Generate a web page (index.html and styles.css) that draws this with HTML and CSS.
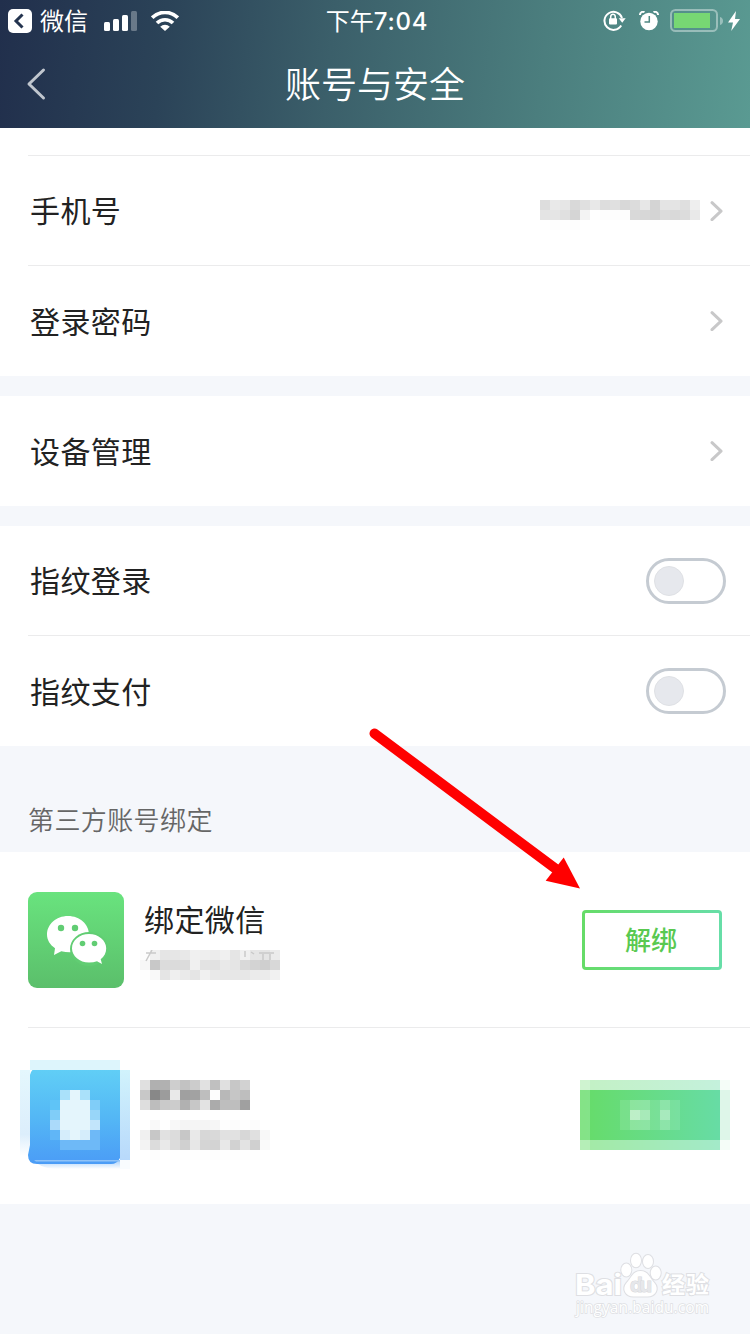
FILE: index.html
```html
<!DOCTYPE html>
<html lang="zh-CN">
<head>
<meta charset="utf-8">
<title>账号与安全</title>
<link rel="stylesheet" href="styles.css">
</head>
<body>
<div class="screen">
  <header class="header">
    <div class="status">
      <div class="status-left">
        <svg class="back-app" width="24" height="24" viewBox="0 0 24 24"><rect width="24" height="24" rx="5" fill="#fff"/><path d="M14.500 5.500 8 12l6.500 6.500" fill="none" stroke="#24344f" stroke-width="3"/></svg>
        <span class="carrier">微信</span>
        <svg class="signal" width="33" height="20" viewBox="0 0 33 20" fill="#fff"><rect y="11" width="6" height="9" rx="1.500"/><rect x="9" y="8" width="6" height="12" rx="1.500"/><rect x="18" y="4" width="6" height="16" rx="1.500"/><rect x="27" width="6" height="20" rx="1.500" opacity=".3"/></svg>
        <svg class="wifi" width="28" height="20" viewBox="0 0 28 20"><g fill="none" stroke="#fff" stroke-width="3.600"><path d="M1.200 6.700a18 18 0 0 1 25.600 0"/><path d="M6 12a11.300 11.300 0 0 1 16 0"/></g><path d="M14 20 9.200 15.700a7 7 0 0 1 9.600 0z" fill="#fff"/></svg>
      </div>
      <div class="time">下午<span class="digits">7:04</span></div>
      <div class="status-right">
        <svg width="23" height="22" viewBox="0 0 23 22"><path d="M18.200 15.500A9 9 0 1 1 19 8" fill="none" stroke="#fff" stroke-width="2"/><path d="M15.700 8.200h7l-3.500 4.600z" fill="#fff"/><path d="M7.700 9V7a2.300 2.800 0 0 1 4.600 0v2" fill="none" stroke="#fff" stroke-width="1.500"/><rect x="6" y="8.200" width="8" height="6.300" rx="1" fill="#fff"/></svg>
        <svg class="alarm" width="20" height="20" viewBox="0 0 20 20"><circle cx="10" cy="10.500" r="8.700" fill="#fff"/><path d="M10.300 5v6H5.500" fill="none" stroke="#508883" stroke-width="1.500"/><path d="M1 4A3 3 0 0 1 5.500 1.200M19 4A3 3 0 0 0 14.500 1.200" fill="none" stroke="#fff" stroke-width="2"/></svg>
        <svg class="battery" width="54" height="24" viewBox="0 0 54 24"><rect x="1" y="1" width="46" height="21" rx="4.500" fill="none" stroke="#fff" stroke-opacity=".4" stroke-width="2"/><rect x="4" y="4" width="36" height="15" fill="#77d773"/><path d="M50 8c2 .5 3 2 3 4s-1 3.500-3 4z" fill="#fff" fill-opacity=".4"/></svg>
        <svg class="bolt" width="12" height="20" viewBox="0 0 12 20"><path d="M8 0 0 11.500h5L3.200 20 12 8H7z" fill="#fff"/></svg>
      </div>
    </div>
    <div class="navbar">
      <svg class="nav-back" width="20" height="34" viewBox="0 0 20 34"><path d="M17.500 3 3 17l14.500 14" fill="none" stroke="#c0c6ce" stroke-width="3" stroke-linecap="round" stroke-linejoin="round"/></svg>
      <h1 class="title">账号与安全</h1>
    </div>
  </header>

  <section class="group group-first">
    <div class="row divided">
      <span class="label">手机号</span>
      <svg class="mosaic phone" width="160" height="21" data-rows="dd e9 e6 d9 e0 e8 dd e0 d8 dc e7 d4 e4 e4 df ee/e4 e5 e0 d5 f3 ff fd fd fd d9 d7 d4 dc d9 dc e9/ff fd fe fd ff ff ff ff ff fe fe fe fe fe fe ff"></svg>
      <svg class="chevron" width="14" height="20" viewBox="0 0 14 20"><path d="m2 1.700 9 8.500-9 8.500"/></svg>
    </div>
    <div class="row divided last">
      <span class="label">登录密码</span>
      <svg class="chevron" width="14" height="20" viewBox="0 0 14 20"><path d="m2 1.700 9 8.500-9 8.500"/></svg>
    </div>
  </section>

  <section class="group">
    <div class="row">
      <span class="label">设备管理</span>
      <svg class="chevron" width="14" height="20" viewBox="0 0 14 20"><path d="m2 1.700 9 8.500-9 8.500"/></svg>
    </div>
  </section>

  <section class="group">
    <div class="row short"><span class="label">指纹登录</span><span class="switch"><span class="knob"></span></span></div>
    <div class="row divided last"><span class="label">指纹支付</span><span class="switch"><span class="knob"></span></span></div>
  </section>

  <h2 class="section-title">第三方账号绑定</h2>

  <section class="accounts">
    <div class="account">
      <svg class="app-icon" width="96" height="96" viewBox="0 0 96 96">
        <defs><linearGradient id="wx" x2="0" y2="1"><stop stop-color="#69e37e"/><stop offset="1" stop-color="#5bbf6b"/></linearGradient></defs>
        <rect width="96" height="96" rx="9" fill="url(#wx)"/>
        <path d="M40 24C28 24 19 32.500 19 42.500c0 5.500 3 10.300 8 13.700L26 63l7.300-3.700q4 1 8.500 1C54 60 61 51.500 61 42.500 61 32.500 52 24 40 24z" fill="#fff"/>
        <ellipse cx="61" cy="57" rx="19" ry="17" fill="#61cd73"/>
        <path d="M61 42c-9.500 0-17 6.300-17 14.200S51.500 70.500 61 70.500q4.500 0 8-1.300l5 2.800-1.300-4.700c3.600-2.800 5.500-6.500 5.500-11.100 0-7.900-7.700-14.200-17.200-14.200z" fill="#fff"/>
        <g fill="#61cd73"><circle cx="33" cy="36" r="3.200"/><circle cx="47" cy="36" r="3.200"/><circle cx="54.500" cy="51.500" r="2.800"/><circle cx="66.500" cy="51.500" r="2.800"/></g>
      </svg>
      <div class="account-text">
        <span class="label">绑定微信</span>
        <div class="nickname">
          <svg class="mosaic" width="140" height="30" data-rows="fc f0 e5 e6 e8 f0 ee ec f0 e5 f0 e5 e5 eb/f7 c8 dc db dc f0 e3 e2 e9 e5 d9 d3 cf d8/fe f9 e5 ef ea e5 f0 e9 e7 e7 e7 eb eb f1"></svg>
          <svg class="glyph-traces" width="140" height="12" viewBox="0 0 140 12"><path d="M6 3h10M12 0 6 11M105 1v6M111 2l3 2M119 3h15M123 4v6M130 4v6" /></svg>
        </div>
      </div>
      <button class="unbind">解绑</button>
    </div>

    <div class="account account-second">
      <svg class="qq" width="110" height="110" viewBox="0 0 110 110">
        <defs><linearGradient id="qq" x2="0" y2="1"><stop stop-color="#61cff6"/><stop offset=".5" stop-color="#54b8f5"/><stop offset="1" stop-color="#4b9cf6"/></linearGradient>
        <linearGradient id="qqSide" x2="0" y2="1"><stop stop-color="#d1f3fc"/><stop offset="1" stop-color="#b8d9fb"/></linearGradient>
        <linearGradient id="qqFade" x2="0" y2="1"><stop stop-color="#e4f7fd"/><stop offset=".75" stop-color="#dceefc"/><stop offset="1" stop-color="#fff"/></linearGradient>
        <linearGradient id="qqBottom" x2="0" y2="1"><stop stop-color="#a8d0fa"/><stop offset="1" stop-color="#fff"/></linearGradient></defs>
        <path d="M14 100h86v9H34q-14-1-20-9z" fill="url(#qqBottom)"/>
        <path d="M0 10h10v86H0z" fill="url(#qqFade)"/>
        <path d="M10 15q1-6 7-7h83v90q-3 6-9 6H17q-9 0-9-9l2-10z" fill="url(#qq)"/>
        <path d="M10 0h90v10H10z" fill="#ddf5fc"/>
        <path d="M100 10h10v90h-10z" fill="url(#qqSide)"/>
        <path d="M14 100h86v1.500H16z" fill="#8fc3f8"/>
        <path d="M100 100h10v9h-10z" fill="#f9fcfe"/>
        <path d="M40 40h30v40H40zM50 30h10v10H50z" fill="#e4f5fc"/>
        <path d="M40 30h10v10H40zM60 30h10v10H60z" fill="#aae1fa"/>
        <path d="M30 40h10v10H30z" fill="#5fc4f7"/><path d="M30 50h10v10H30zM70 40h10v10H70z" fill="#80cdf8"/>
        <path d="M30 60h10v10H30z" fill="#abdafa"/><path d="M70 50h10v10H70z" fill="#98d6f9"/><path d="M70 60h10v10H70z" fill="#c2e5fb"/>
        <path d="M30 70h10v10H30z" fill="#60b6f7"/><path d="M70 70h10v10H70zM40 80h40v10H40z" fill="#6eb9f7"/><path d="M40 70h10v10H40zM60 70h10v10H60z" fill="#d5edfb"/>
      </svg>
      <div class="hidden-text">
        <svg class="mosaic" width="110" height="30" data-rows="e0 b0 b1 ce c2 cc e1 c0 e0 c7 d2/c8 88 9c e9 a0 a2 be fd b8 c6 be/de bd ca cc b1 c7 e3 ab be be a0"></svg>
        <svg class="mosaic" width="130" height="40" data-rows="ff f9 ff f8 f4 f5 f4 f6 fe fc fe fc ff/f0 c7 e1 dc c7 e9 d7 d9 e1 e1 d7 e0 f8/f3 dc e9 dc d0 e7 d5 d3 e8 d2 e3 d0 fa/ff fd ff fe fe fe fe fd fe fe fe fe ff"></svg>
      </div>
      <svg class="bind-button" width="150" height="70" viewBox="0 0 150 70">
        <defs><linearGradient id="bind"><stop stop-color="#66dc68"/><stop offset="1" stop-color="#67dca5"/></linearGradient></defs>
        <path d="M0 0h140v70H0z" fill="url(#bind)"/>
        <path d="M0 0h140v10H0z" fill="#fff" fill-opacity=".61"/>
        <path d="M0 60h140v10H0z" fill="#fff" fill-opacity=".4"/>
        <path d="M0 0h10v70H0z" fill="#fff" fill-opacity=".2"/>
        <path d="M140 10h10v50h-10z" fill="#def6e9"/><path d="M140 0h10v10h-10zM140 60h10v10h-10z" fill="#f5fdf8"/>
        <g fill="#fff"><path d="M40 20h60v30H40z" fill-opacity=".12"/><path d="M50 20h20v30H50zM80 20h10v30H80z" fill-opacity=".15"/><path d="M50 30h20v10H50zM80 30h10v10H80z" fill-opacity=".24"/><path d="M50 30h10v10H50z" fill-opacity=".25"/></g>
      </svg>
    </div>
  </section>

  <footer class="footer">
    <svg class="watermark" width="142" height="70" viewBox="0 0 142 70">
      <g class="wm-ink">
        <text class="wm-logo" x="4" y="42" textLength="47" lengthAdjust="spacingAndGlyphs">Bai</text>
        <ellipse cx="55.300" cy="17" rx="5" ry="6.500"/><ellipse cx="65" cy="7.500" rx="5" ry="6.800"/><ellipse cx="77" cy="8.500" rx="5" ry="6.500"/><ellipse cx="84.700" cy="20" rx="5" ry="6.500"/>
        <path d="M69.500 18c-8 0-9 7-14 12-5 6-1 13.500 7 13.500h14c8 0 12-7.500 7-13.500-5-5-6-12-14-12z"/>
        <text class="wm-du" x="59" y="38.500" textLength="22">du</text>
        <text class="wm-cn" x="91" y="40" textLength="47">经验</text>
        <text class="wm-url" x="5" y="60" textLength="133">jingyan.baidu.com</text>
      </g>
    </svg>
  </footer>

  <svg class="arrow" width="214" height="168" viewBox="0 0 214 168" fill="red"><path d="M8.500 7.500 190 143" stroke="red" stroke-width="10" stroke-linecap="round"/><path d="m214 162.500-16.300-31-18 23.200z"/></svg>
</div>
<script src="mosaic.js"></script>
</body>
</html>
```
FILE: styles.css
```css
* { box-sizing: border-box; }
body {
  margin: 0;
  background: #f5f7fb;
  font-family: "Noto Sans CJK SC", sans-serif;
  color: #222;
}
svg { display: block; flex: none; }
.screen {
  position: relative;
  display: flex;
  flex-direction: column;
  width: 750px;
  height: 1334px;
  overflow: hidden;
}

.header {
  height: 128px;
  background: linear-gradient(96deg, #212f4c 0%, #2b4358 22%, #3b5f6a 44%, #4b7e7e 72%, #5a9a92 100%);
  color: #fff;
}
.status {
  display: grid;
  grid-template-columns: 1fr auto 1fr;
  align-items: center;
  height: 40px;
  padding: 0 10px 0 8px;
}
.status-left, .status-right { display: flex; align-items: center; }
.status-right { justify-content: flex-end; }
.carrier { margin-left: 8px; padding-bottom: 2px; font-size: 24px; line-height: 38px; }
.signal { margin-left: 16px; }
.wifi { margin-left: 14px; }
.time { padding-left: 6px; font-size: 24px; line-height: 40px; white-space: nowrap; }
.digits { font-family: Inter, sans-serif; font-weight: 500; letter-spacing: 0.8px; }
.alarm { margin-left: 13px; }
.battery { margin-left: 11px; }
.bolt { margin-left: 4px; }

.navbar {
  display: grid;
  grid-template-columns: 100px 1fr 100px;
  align-items: center;
  height: 88px;
}
.nav-back { margin-left: 26px; }
.title { margin: 0; padding-bottom: 4px; text-align: center; font-size: 36px; font-weight: 350; line-height: 84px; }

.group { flex: none; margin-bottom: 20px; background: #fff; }
.group-first { padding-top: 27px; }
.row {
  display: flex;
  align-items: center;
  height: 110px;
  margin-left: 28px;
  padding: 0 26px 0 2px;
}
.row.last { height: 111px; }
.row.short { height: 109px; }
.divided { border-top: 1px solid #ebebec; }
.label { font-size: 30px; line-height: 44px; letter-spacing: 0.4px; }
.row .label { flex: 1; padding-bottom: 3px; }
.chevron { fill: none; stroke: #c8c8c9; stroke-width: 3; stroke-linecap: round; stroke-linejoin: round; }
.phone { margin-right: 10px; }
.mosaic { overflow: visible; }

.switch {
  width: 80px;
  height: 46px;
  margin-right: -2px;
  padding: 5px;
  border: 3px solid #c5cbd2;
  border-radius: 23px;
}
.row.short .switch { margin-top: 1px; }
.row.last .switch { margin-bottom: 1px; }
.knob { display: block; width: 30px; height: 30px; border: 1px solid #dfe1e5; border-radius: 50%; background: #e6e8ed; }

.section-title {
  flex: none;
  height: 106px;
  margin: -20px 0 0;
  padding: 53px 28px 0;
  color: #666;
  font-size: 26px;
  font-weight: 350;
  line-height: 40px;
  letter-spacing: 0.4px;
}

.accounts { flex: none; height: 352px; background: #fff; }
.account { display: flex; height: 175px; padding: 40px 28px 0; }
.account-text { flex: 1; margin-left: 20px; padding-top: 4px; }
.account-text .label { display: block; }
.nickname { display: grid; margin: 10px 0 0 -4px; }
.nickname > svg { grid-area: 1 / 1; }
.glyph-traces { fill: none; stroke: #c9c9c9; stroke-width: 1.5; }
.unbind {
  width: 140px;
  height: 60px;
  margin-top: 18px;
  padding: 0 2px 2px 0;
  border: 3px solid transparent;
  border-radius: 4px;
  background: linear-gradient(#fff, #fff) padding-box, linear-gradient(90deg, #66dc68, #67dea8) border-box;
  color: #59c950;
  font: 500 26px/52px "Noto Sans CJK SC", sans-serif;
}
.account-second { height: 177px; margin-left: 28px; padding: 32px 20px 0 0; border-top: 1px solid #ebebec; }
.qq { margin-left: -8px; }
.hidden-text { display: flex; flex: 1; flex-direction: column; gap: 10px; margin-left: 10px; padding-top: 20px; }
.bind-button { margin-top: 20px; }

.footer { display: flex; justify-content: flex-end; padding: 49px 37px 0 0; }
.watermark { overflow: visible; }
.wm-ink { fill: #fff; stroke: #dedfe3; stroke-width: 2; paint-order: stroke; font-family: Inter, "Noto Sans CJK SC", sans-serif; }
.wm-logo { font-size: 29px; font-weight: 700; }
.wm-du { font-size: 20px; font-weight: 700; fill: #e6e7ea; stroke: #d8d9dc; stroke-width: 1; }
.wm-cn { font-size: 23px; font-weight: 700; }
.wm-url { font-family: "Open Sans", sans-serif; font-size: 15.5px; stroke-width: 1.5; }

.arrow { position: absolute; left: 366px; top: 726px; }
```
FILE: mosaic.js
```js
// Fills each mosaic with 10px grey cells; every value is one grey level in hex.
document.querySelectorAll(".mosaic").forEach(function (svg) {
  svg.dataset.rows.split("/").forEach(function (row, y) {
    row.split(" ").forEach(function (grey, x) {
      var cell = document.createElementNS("http://www.w3.org/2000/svg", "rect");
      cell.setAttribute("x", x * 10);
      cell.setAttribute("y", y * 10);
      cell.setAttribute("width", 10);
      cell.setAttribute("height", 10);
      cell.setAttribute("fill", "#" + grey + grey + grey);
      svg.appendChild(cell);
    });
  });
});
```
